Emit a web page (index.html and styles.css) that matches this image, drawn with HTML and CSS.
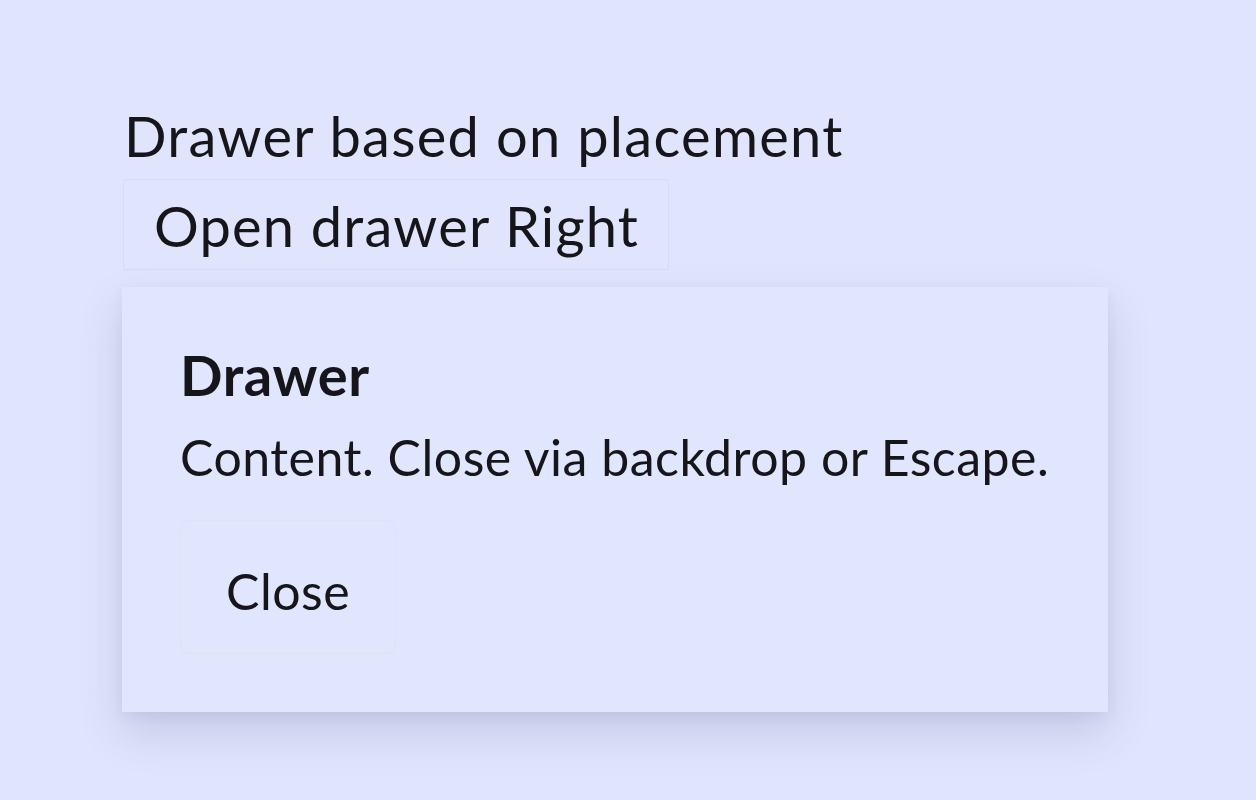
FILE: index.html
```html
<!DOCTYPE html>
<html lang="en">
<head>
<meta charset="utf-8">
<title>Drawer based on placement</title>
<link rel="stylesheet" href="styles.css">
</head>
<body>
  <main class="page">
    <div class="section-title">Drawer based on placement</div>
    <button class="open-btn" type="button">Open drawer Right</button>
    <aside class="drawer">
      <div class="drawer-title">Drawer</div>
      <p class="drawer-text">Content. Close via backdrop or Escape.</p>
      <button class="close-btn" type="button">Close</button>
    </aside>
  </main>
</body>
</html>
```

FILE: styles.css
```css
html, body {
  margin: 0;
  padding: 0;
}
body {
  background: #e0e5fd;
  color: #16161a;
  font-family: "Segoe UI", Lato, "Noto Sans", sans-serif;
  font-size: 56px;
  line-height: 1.2;
  min-height: 800px;
}
.page {
  padding: 102px 0 0 122px;
  display: flex;
  flex-direction: column;
  align-items: flex-start;
}
.section-title {
  padding-left: 2px;
  font-size: 56px;
  letter-spacing: 1.3px;
}
.open-btn {
  margin-top: 10px;
  margin-left: 1px;
  font: inherit;
  letter-spacing: 1.2px;
  color: inherit;
  background: transparent;
  border: 1px solid #d8dcee;
  border-radius: 0;
  padding: 12px 29px 10px 30px;
  cursor: pointer;
}
.drawer {
  margin-top: 17px;
  box-sizing: border-box;
  width: 986px;
  padding: 54px 56px 58px 58px;
  background: #e0e6fe;
  box-shadow: 0 20px 40px rgba(60, 70, 120, 0.18), 0 4px 12px rgba(60, 70, 120, 0.05);
  display: flex;
  flex-direction: column;
  align-items: flex-start;
}
.drawer-title {
  font-weight: 700;
  font-size: 56px;
  letter-spacing: 0.6px;
}
.drawer-text {
  margin: 18px 0 0 0;
  font-size: 50px;
  letter-spacing: 0.5px;
}
.close-btn {
  margin-top: 33px;
  font: inherit;
  font-size: 50px;
  letter-spacing: 0.5px;
  color: inherit;
  background: transparent;
  border: 1px solid #e3e1ea;
  border-radius: 10px;
  padding: 40px 45px 32px 45px;
  cursor: pointer;
}
```
